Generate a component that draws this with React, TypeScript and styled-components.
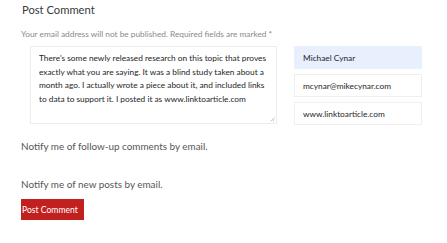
import React from "react";
import styled, { createGlobalStyle } from "styled-components";

const Global = createGlobalStyle`
  html, body { margin: 0; padding: 0; background: #fff; }
  body { font-family: Lato, "Open Sans", sans-serif; }
`;

const Page = styled.div`
  padding: 3px 0 0 21px;
  width: 447px;
  box-sizing: border-box;
  overflow: hidden;
`;

const Heading = styled.h3`
  margin: 0;
  font-size: 11.2px;
  font-weight: 400;
  color: #3a3a3a;
  line-height: 14px;
  padding-left: 1px;
`;

const Note = styled.p`
  margin: 12px 0 0 0;
  font-size: 8.3px;
  line-height: 11px;
  color: #8a8a8a;
`;

const Fields = styled.div`
  display: flex;
  align-items: flex-start;
  gap: 17px;
  margin: 6px 0 0 9px;
`;

const TextArea = styled.div`
  width: 247px;
  height: 78px;
  box-sizing: border-box;
  border: 1px solid #ececec;
  padding: 5px 8px;
  font-size: 8.3px;
  line-height: 13.5px;
  color: #1e1e1e;
  position: relative;
`;

const Grip = styled.svg`
  position: absolute;
  right: 1px;
  bottom: 1px;
`;

const Inputs = styled.div`
  display: flex;
  flex-direction: column;
  gap: 5px;
  width: 128px;
`;

const Input = styled.div<{ $filled?: boolean }>`
  height: 23px;
  box-sizing: border-box;
  border: 1px solid ${(p) => (p.$filled ? "#e8f0fe" : "#efefef")};
  background: ${(p) => (p.$filled ? "#e8f0fe" : "#fff")};
  padding: 0 8px;
  display: flex;
  align-items: center;
  font-size: 8.3px;
  color: #1e1e1e;
  white-space: nowrap;
`;

const Notify = styled.p<{ $top: number }>`
  margin: ${(p) => p.$top}px 0 0 0;
  font-size: 9.9px;
  line-height: 12px;
  color: #555;
`;

const Button = styled.button`
  display: block;
  margin-top: 9px;
  width: 63px;
  height: 21px;
  background: #c21f1f;
  color: #fff;
  border: none;
  padding: 0 0 0 1px;
  text-align: left;
  font-family: Lato, sans-serif;
  font-size: 8.6px;
`;

export default function App() {
  return (
    <>
      <Global />
      <Page>
        <Heading>Post Comment</Heading>
        <Note>Your email address will not be published. Required fields are marked *</Note>
        <Fields>
          <TextArea>
            There's some newly released research on this topic that proves exactly what you are saying. It was a blind study taken about a month ago. I actually wrote a piece about it, and included links to data to support it. I posted it as www.linktoarticle.com
            <Grip width="5" height="5" viewBox="0 0 5 5">
              <path d="M4.5 0.5 L0.5 4.5 M4.5 2.5 L2.5 4.5" stroke="#aaa" strokeWidth="0.7" />
            </Grip>
          </TextArea>
          <Inputs>
            <Input $filled>Michael Cynar</Input>
            <Input>mcynar@mikecynar.com</Input>
            <Input>www.linktoarticle.com</Input>
          </Inputs>
        </Fields>
        <Notify $top={15}>Notify me of follow-up comments by email.</Notify>
        <Notify $top={26}>Notify me of new posts by email.</Notify>
        <Button>Post Comment</Button>
      </Page>
    </>
  );
}
